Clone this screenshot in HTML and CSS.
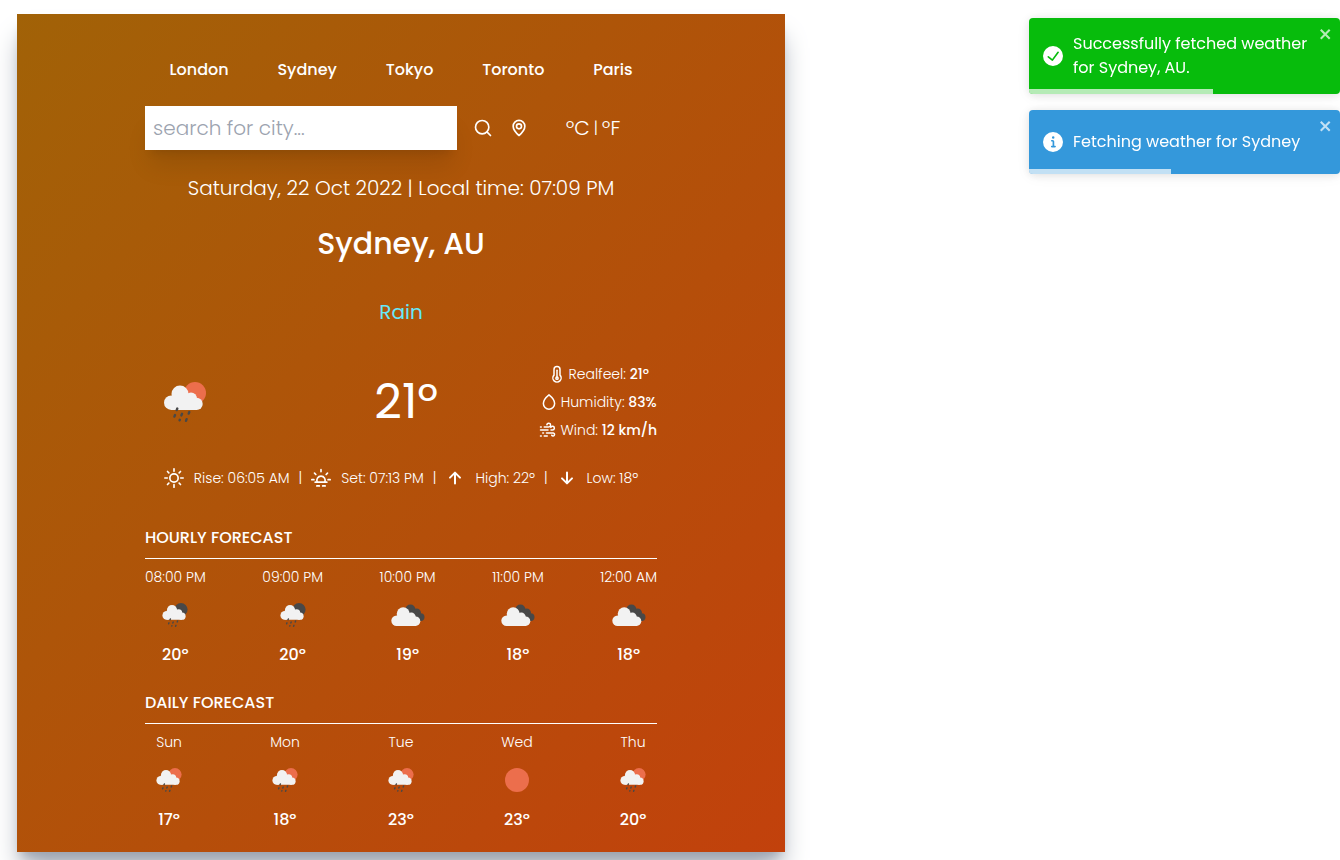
FILE: index.html
```
<!DOCTYPE html>
<html lang="en">
<head>
<meta charset="utf-8">
<meta name="viewport" content="width=device-width, initial-scale=1">
<title>Weather</title>
<link rel="stylesheet" href="styles.css">
</head>
<body>
<svg class="sprite" aria-hidden="true">
  <symbol id="drops" viewBox="0 0 80 80">
    <path d="M32.300 46.500l-.6 1.600M30 53l-.6 1.600M37 51.800l-.6 1.600M44.300 50l-.6 1.600M34.800 57.800l-.2.500M41.600 57.200l-.6 1.600" stroke="#484848" stroke-width="2.400" stroke-linecap="round"/>
  </symbol>
  <symbol id="cloud" viewBox="0 0 80 80">
    <g fill="#f2f2f2"><circle cx="26.300" cy="40.700" r="7.300"/><circle cx="35" cy="32" r="8.500"/><circle cx="46" cy="36.500" r="6"/><circle cx="51.600" cy="41.900" r="6.100"/><path d="M26 34h18l8 4v10H26z"/></g>
  </symbol>
  <symbol id="rain-day" viewBox="0 0 80 80">
    <circle cx="50" cy="31" r="11" fill="#ec6e4c"/><use href="#cloud"/><use href="#drops"/>
  </symbol>
  <symbol id="rain-night" viewBox="0 0 80 80">
    <circle cx="50" cy="31" r="11" fill="#484848"/><use href="#cloud"/><use href="#drops"/>
  </symbol>
  <symbol id="clouds" viewBox="0 0 80 80">
    <g fill="#484848"><circle cx="44" cy="31" r="8.500"/><circle cx="54.500" cy="36" r="7"/><circle cx="61" cy="43.500" r="6.500"/><path d="M42.500 34h14l6 16h-20z"/></g>
    <g fill="#f2f2f2"><circle cx="21" cy="49.500" r="8.800"/><circle cx="32" cy="38" r="10.800"/><circle cx="45.500" cy="43.500" r="7.500"/><circle cx="52.500" cy="50.300" r="8"/><path d="M20.500 42h24l9 3v13.300h-33z"/></g>
  </symbol>
  <symbol id="clear" viewBox="0 0 80 80"><circle cx="40" cy="40" r="20" fill="#ec6e4c"/></symbol>
</svg>

<main class="card">
  <nav class="cities" aria-label="Cities">
    <button type="button">London</button>
    <button type="button">Sydney</button>
    <button type="button">Tokyo</button>
    <button type="button">Toronto</button>
    <button type="button">Paris</button>
  </nav>

  <div class="controls">
    <form class="search">
      <input class="search-box" type="text" placeholder="search for city..." aria-label="Search for city">
      <button type="button" aria-label="Search"><svg class="icon" viewBox="0 0 24 24"><g class="line"><circle cx="11" cy="11" r="8"/><path d="M17 17l4 4"/></g></svg></button>
      <button type="button" aria-label="Use my location"><svg class="icon" viewBox="0 0 24 24"><g class="line"><path d="M12 21C10.500 19.700 5 14.500 5 9.900a7 7 0 0 1 14 0C19 14.500 13.500 19.700 12 21z"/><circle cx="12" cy="10" r="3"/></g></svg></button>
    </form>
    <div class="units">
      <button type="button">ºC</button>
      <span>|</span>
      <button type="button">ºF</button>
    </div>
  </div>

  <p class="date">Saturday, 22 Oct 2022 | Local time: 07:09 PM</p>
  <h1 class="place">Sydney, AU</h1>
  <p class="condition">Rain</p>

  <section class="current">
    <svg class="current-icon" role="img" aria-label="Rain"><use href="#rain-day"/></svg>
    <p class="temperature">21º</p>
    <ul class="details">
      <li><svg class="icon-small" viewBox="0 0 24 24"><g class="line"><path d="M8 13.500V6a4 4 0 0 1 8 0v7.500a5.500 5.500 0 1 1-8 0z"/><path d="M12 7v9"/><circle cx="12" cy="17.500" r="1.500"/></g></svg>Realfeel: <b>21º</b></li>
      <li><svg class="icon-small" viewBox="0 0 24 24"><g class="line"><path d="M12 2.500c3.500 2.800 7.500 7.200 7.500 11.500a7.500 7.500 0 0 1-15 0C4.500 9.700 8.500 5.300 12 2.500z"/></g></svg>Humidity: <b>83%</b></li>
      <li><svg class="icon-small" viewBox="0 0 24 24"><g class="line"><path d="M2 8h1M7 8h6a2.500 2.500 0 1 0-2.500-3M2 12h10M16 12h2a2.500 2.500 0 1 0-2.300-3.500M5 16h1M10 16h9a2 2 0 1 1-2 3M2 20h1M7 20h4"/></g></svg>Wind: <b>12 km/h</b></li>
    </ul>
  </section>

  <div class="facts">
    <svg class="icon" viewBox="0 0 24 24"><g class="line"><circle cx="12" cy="12" r="5"/><path d="M12 1v3M12 20v3M1 12h3M20 12h3M4.200 4.200l1.600 1.600M18.200 18.200l1.600 1.600M4.200 19.800l1.600-1.600M18.200 5.800l1.600-1.600"/></g></svg>
    <span>Rise: 06:05 AM</span><span>|</span>
    <svg class="icon" viewBox="0 0 24 24"><g class="line"><path d="M7.500 17a5 5 0 1 1 9 0M5 17h14M7 21.500h3M14 21.500h3M12 2v2.500M1 14h2.500M20.500 14H23M4.200 6.200l1.600 1.600M18.200 7.800l1.600-1.600"/></g></svg>
    <span>Set: 07:13 PM</span><span>|</span>
    <svg class="icon" viewBox="0 0 24 24"><g class="line arrow"><path d="M12 18.500V6M6 11.500L12 5.500l6 6"/></g></svg>
    <span>High: 22º</span><span>|</span>
    <svg class="icon" viewBox="0 0 24 24"><g class="line arrow"><path d="M12 5.500V18M6 12.500l6 6 6-6"/></g></svg>
    <span>Low: 18º</span>
  </div>

  <section class="forecast">
    <h2>HOURLY FORECAST</h2>
    <hr>
    <ul>
      <li><span>08:00 PM</span><svg><use href="#rain-night"/></svg><b>20º</b></li>
      <li><span>09:00 PM</span><svg><use href="#rain-night"/></svg><b>20º</b></li>
      <li><span>10:00 PM</span><svg><use href="#clouds"/></svg><b>19º</b></li>
      <li><span>11:00 PM</span><svg><use href="#clouds"/></svg><b>18º</b></li>
      <li><span>12:00 AM</span><svg><use href="#clouds"/></svg><b>18º</b></li>
    </ul>
  </section>

  <section class="forecast">
    <h2>DAILY FORECAST</h2>
    <hr>
    <ul>
      <li><span>Sun</span><svg><use href="#rain-day"/></svg><b>17º</b></li>
      <li><span>Mon</span><svg><use href="#rain-day"/></svg><b>18º</b></li>
      <li><span>Tue</span><svg><use href="#rain-day"/></svg><b>23º</b></li>
      <li><span>Wed</span><svg><use href="#clear"/></svg><b>23º</b></li>
      <li><span>Thu</span><svg><use href="#rain-day"/></svg><b>20º</b></li>
    </ul>
  </section>
</main>

<aside class="toasts">
  <div class="toast toast-success" role="alert">
    <svg class="icon" viewBox="0 0 24 24"><path fill="currentColor" d="M12 0a12 12 0 1012 12A12.014 12.014 0 0012 0zm6.927 8.200l-6.845 9.289a1.011 1.011 0 01-1.430.188l-4.888-3.908a1 1 0 111.250-1.562l4.076 3.261 6.227-8.451a1 1 0 111.610 1.183z"/></svg>
    <p>Successfully fetched weather for Sydney, AU.</p>
    <button class="close" type="button" aria-label="Close"><svg viewBox="0 0 14 16"><path fill="currentColor" d="M7.710 8.230l3.750 3.750-1.480 1.480-3.750-3.750-3.750 3.750L1 11.980l3.750-3.750L1 4.480 2.480 3l3.750 3.750L9.980 3l1.480 1.480-3.750 3.750z"/></svg></button>
    <div class="progress" style="width:59.200%"></div>
  </div>
  <div class="toast toast-info" role="alert">
    <svg class="icon" viewBox="0 0 24 24"><path fill="currentColor" d="M12 0a12 12 0 1012 12A12.013 12.013 0 0012 0zm.250 5a1.500 1.500 0 11-1.500 1.500 1.500 1.500 0 011.500-1.500zm2.250 13.500h-4a1 1 0 010-2h.750a.250.250 0 00.250-.250v-4.500a.250.250 0 00-.250-.250h-.750a1 1 0 010-2h1a2 2 0 012 2v4.750a.250.250 0 00.250.250h.750a1 1 0 110 2z"/></svg>
    <p>Fetching weather for Sydney</p>
    <button class="close" type="button" aria-label="Close"><svg viewBox="0 0 14 16"><path fill="currentColor" d="M7.710 8.230l3.750 3.750-1.480 1.480-3.750-3.750-3.750 3.750L1 11.980l3.750-3.750L1 4.480 2.480 3l3.750 3.750L9.980 3l1.480 1.480-3.750 3.750z"/></svg></button>
    <div class="progress" style="width:45.500%"></div>
  </div>
</aside>
</body>
</html>
```
FILE: styles.css
```
*, *::before, *::after { box-sizing: border-box; }

body {
  min-height: 100vh;
  margin: 0;
  padding: 14px 17px 8px;
  background: #fff;
  font-family: Poppins, Inter, sans-serif;
  font-size: 16px;
  line-height: 24px;
}

h1, h2, p, ul { margin: 0; padding: 0; }
ul { list-style: none; }
b { font-weight: 500; }

button {
  padding: 0;
  border: 0;
  background: none;
  color: inherit;
  font: inherit;
  cursor: pointer;
}

svg { display: block; flex: none; }

.sprite { position: absolute; width: 0; height: 0; }
.icon { width: 20px; height: 20px; }
.icon-small { width: 18px; height: 18px; margin-right: 3px; }

.line {
  fill: none;
  stroke: currentColor;
  stroke-width: 2;
  stroke-linecap: round;
  stroke-linejoin: round;
}
.arrow { stroke-width: 2.4; }

.card {
  max-width: 768px;
  padding: 44px 128px 20px;
  background: linear-gradient(to bottom right, #a16207, #c2410c);
  box-shadow: 0 20px 25px -5px #9ca3af, 0 8px 10px -6px #9ca3af;
  color: #fff;
}

.cities {
  display: flex;
  justify-content: space-around;
  margin-bottom: 24px;
  font-weight: 500;
}

.controls {
  display: grid;
  grid-template-columns: 3fr 1fr;
  align-items: center;
}

.search {
  display: flex;
  align-items: center;
  gap: 16px;
  min-width: 0;
}

.search-box {
  flex: 1;
  min-width: 0;
  padding: 8px;
  border: 0;
  box-shadow: 0 20px 25px -5px rgba(0, 0, 0, 0.1), 0 8px 10px -6px rgba(0, 0, 0, 0.1);
  background: #fff;
  color: #374151;
  font: 300 20px/28px Poppins, Inter, sans-serif;
}
.search-box::placeholder { color: #9ca3af; opacity: 1; }

.units {
  display: flex;
  align-items: center;
  justify-content: center;
  gap: 4px;
  font-size: 20px;
  font-weight: 300;
}
.units span { font-size: 16px; }

.date {
  margin: 24px 0;
  font-size: 20px;
  font-weight: 300;
  line-height: 28px;
  text-align: center;
}

.place {
  font-size: 30px;
  font-weight: 500;
  line-height: 36px;
  text-align: center;
}

.condition {
  margin: 36px 0;
  color: #67e8f9;
  font-size: 20px;
  line-height: 28px;
  text-align: center;
}

.current {
  display: grid;
  grid-template-columns: 80px 1fr auto;
  align-items: center;
}
.current-icon { width: 80px; height: 80px; }

.temperature {
  padding-left: 48px;
  font-size: 48px;
  line-height: 48px;
  text-align: center;
}

.details {
  display: flex;
  flex-direction: column;
  gap: 8px;
  font-size: 14px;
  font-weight: 300;
  line-height: 20px;
}
.details li {
  display: flex;
  align-items: center;
  justify-content: center;
  white-space: pre;
}

.facts {
  display: flex;
  align-items: center;
  justify-content: center;
  gap: 9px;
  margin: 26px 0 38px;
  font-size: 14px;
  font-weight: 300;
  line-height: 20px;
  white-space: nowrap;
}
.facts svg { margin-right: 1px; }

.forecast + .forecast { margin-top: 24px; }
.forecast h2 { font-size: 16px; font-weight: 500; line-height: 24px; }
.forecast hr { margin: 8px 0; border: 0; border-top: 1px solid #fff; }
.forecast ul { display: flex; justify-content: space-between; }
.forecast li { display: flex; flex-direction: column; align-items: center; }
.forecast span { font-size: 14px; font-weight: 300; line-height: 20px; }
.forecast svg { width: 48px; height: 48px; margin: 4px 0; }

.toasts {
  position: fixed;
  top: 18px;
  right: 0;
  display: flex;
  flex-direction: column;
  gap: 16px;
  width: 311px;
}

.toast {
  position: relative;
  display: flex;
  align-items: center;
  gap: 10px;
  min-height: 64px;
  padding: 14px 32px 14px 14px;
  overflow: hidden;
  border-radius: 4px;
  box-shadow: 0 1px 10px rgba(0, 0, 0, 0.1), 0 2px 15px rgba(0, 0, 0, 0.05);
  color: #fff;
}
.toast-success { background: #07bc0c; }
.toast-info { background: #3498db; }

.close {
  position: absolute;
  top: 8px;
  right: 7px;
  opacity: 0.7;
}
.close svg { width: 14px; height: 16px; }

.progress {
  position: absolute;
  bottom: 0;
  left: 0;
  height: 5px;
  background: rgba(255, 255, 255, 0.7);
}
```
